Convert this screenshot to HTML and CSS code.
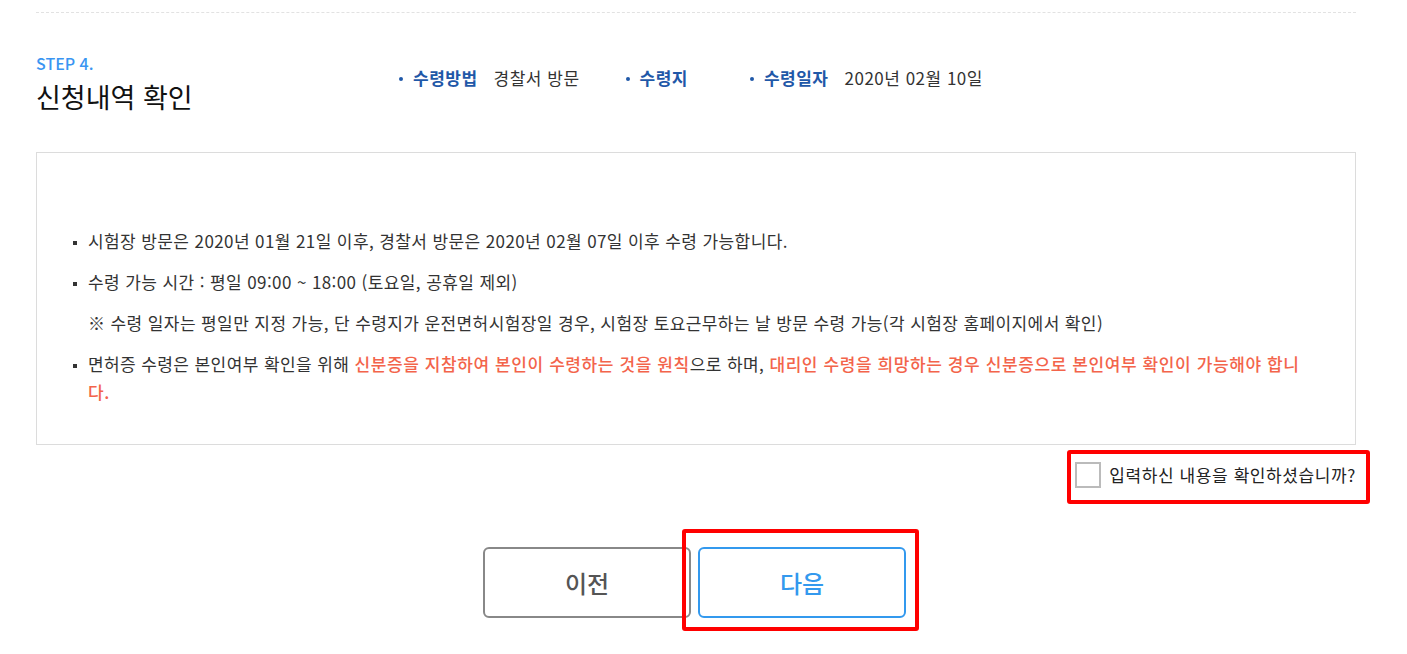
FILE: index.html
```html
<!DOCTYPE html>
<html lang="ko">
<head>
<meta charset="utf-8">
<title>신청내역 확인</title>
<link rel="stylesheet" href="styles.css">
</head>
<body>
<div class="page">
  <div class="divider"></div>
  <div class="header">
    <div class="heading">
      <div class="step">STEP 4.</div>
      <h2 class="title">신청내역 확인</h2>
    </div>
    <ul class="info">
      <li class="info-item"><span class="info-label">수령방법</span><span class="info-value">경찰서 방문</span></li>
      <li class="info-item"><span class="info-label">수령지</span><span class="info-value"></span></li>
      <li class="info-item"><span class="info-label">수령일자</span><span class="info-value">2020년 02월 10일</span></li>
    </ul>
  </div>
  <div class="notice">
    <ul class="notice-list">
      <li class="notice-item">시험장 방문은 2020년 01월 21일 이후, 경찰서 방문은 2020년 02월 07일 이후 수령 가능합니다.</li>
      <li class="notice-item">수령 가능 시간 : 평일 09:00 ~ 18:00 (토요일, 공휴일 제외)</li>
      <li class="notice-note">※ 수령 일자는 평일만 지정 가능, 단 수령지가 운전면허시험장일 경우, 시험장 토요근무하는 날 방문 수령 가능(각 시험장 홈페이지에서 확인)</li>
      <li class="notice-item">면허증 수령은 본인여부 확인을 위해 <span class="em">신분증을 지참하여 본인이 수령하는 것을 원칙</span>으로 하며, <span class="em">대리인 수령을 희망하는 경우 신분증으로 본인여부 확인이 가능해야 합니다.</span></li>
    </ul>
  </div>
  <div class="confirm-row">
    <label class="confirm">
      <span class="checkbox"></span>
      <span class="confirm-text">입력하신 내용을 확인하셨습니까?</span>
      <span class="highlight hl-check"></span>
    </label>
  </div>
  <div class="buttons">
    <button class="btn btn-prev" type="button">이전</button>
    <div class="btn-wrap">
      <button class="btn btn-next" type="button">다음</button>
      <span class="highlight hl-next"></span>
    </div>
  </div>
</div>
</body>
</html>
```
FILE: styles.css
```css
* { box-sizing: border-box; }
html, body { margin: 0; padding: 0; background: #fff; }
body {
  font-family: "Noto Sans CJK KR", "Noto Sans", sans-serif;
  color: #222;
}
.page {
  width: 1320px;
  margin-left: 36px;
  padding-top: 12px;
  padding-bottom: 30px;
}
.divider {
  border-top: 1px dashed #e2e2e2;
}
.header {
  display: flex;
  align-items: flex-start;
  padding-top: 38px;
}
.heading { width: 363px; }
.step {
  font-size: 16px;
  line-height: 24px;
  color: #3a95f2;
  font-weight: 500;
}
.title {
  margin: 4px 0 0;
  font-size: 27px;
  line-height: 36px;
  font-weight: 400;
  color: #111;
}
.info {
  list-style: none;
  margin: 0;
  padding: 0;
  display: flex;
  padding-top: 15px;
}
.info-item {
  font-size: 17px;
  line-height: 24px;
  letter-spacing: 0.5px;
  margin-right: 46px;
  display: flex;
}
.info-item::before {
  content: "";
  width: 4px;
  height: 4px;
  border-radius: 50%;
  background: #1f58a8;
  margin: 11px 10px 0 0;
}
.info-label {
  font-weight: 700;
  color: #1f58a8;
}
.info-value {
  margin-left: 16px;
  color: #333;
}
.notice {
  margin-top: 37px;
  border: 1px solid #dcdcdc;
  padding: 74px 50px 38px 51px;
}
.notice-list {
  list-style: none;
  margin: 0;
  padding: 0;
}
.notice-list li {
  font-size: 17px;
  letter-spacing: 0.4px;
  line-height: 28px;
  color: #333;
  margin-bottom: 13px;
}
.notice-list li:last-child { margin-bottom: 0; }
.notice-item::before {
  content: "";
  display: inline-block;
  width: 4px;
  height: 4px;
  background: #333;
  margin-left: -15px;
  margin-right: 11px;
  vertical-align: middle;
}
.em {
  color: #f3644b;
  font-weight: 500;
  letter-spacing: 0.6px;
}
.confirm-row {
  display: flex;
  justify-content: flex-end;
  margin-top: 17px;
}
.confirm {
  position: relative;
  display: flex;
  align-items: center;
  gap: 8px;
}
.checkbox {
  width: 26px;
  height: 26px;
  border: 2px solid #bbb;
  background: #fff;
}
.confirm-text {
  font-size: 17px;
  letter-spacing: 0.6px;
  line-height: 26px;
  color: #222;
}
.highlight {
  position: absolute;
  display: block;
  border: 4px solid #ff0000;
  border-radius: 3px;
  pointer-events: none;
}
.hl-check { left: -8px; right: -14px; top: -12px; bottom: -16px; }
.buttons {
  display: flex;
  justify-content: center;
  align-items: flex-start;
  gap: 7px;
  margin-top: 59px;
  padding-right: 3px;
}
.btn-wrap {
  position: relative;
  width: 208px;
  height: 71px;
}
.btn {
  width: 208px;
  height: 71px;
  border-radius: 6px;
  background: #fff;
  font-family: "Noto Sans CJK KR", "Noto Sans", sans-serif;
  font-size: 24px;
  font-weight: 500;
  display: block;
  margin: 0;
  padding: 0;
}
.btn-prev {
  border: 2px solid #888;
  color: #555;
}
.btn-next {
  border: 2px solid #3399ee;
  color: #3399ee;
}
.hl-next { left: -16px; top: -18px; width: 237px; height: 102px; }
```
